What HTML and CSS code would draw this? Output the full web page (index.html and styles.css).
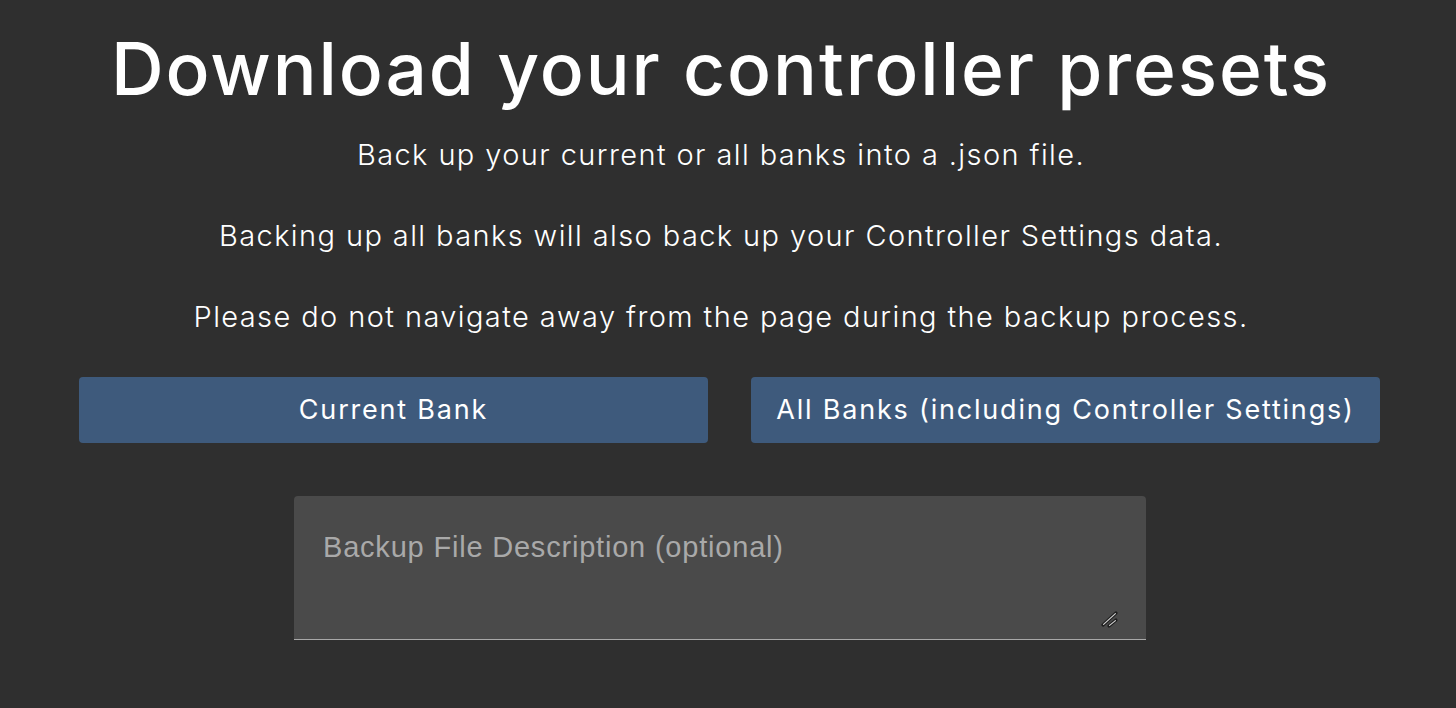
FILE: index.html
```html
<!DOCTYPE html>
<html lang="en">
<head>
<meta charset="utf-8">
<title>Download your controller presets</title>
<link rel="stylesheet" href="styles.css">
</head>
<body>
<main class="page">
  <h1 class="title">Download your controller presets</h1>
  <p class="lead">Back up your current or all banks into a .json file.</p>
  <p class="lead">Backing up all banks will also back up your Controller Settings data.</p>
  <p class="lead">Please do not navigate away from the page during the backup process.</p>
  <div class="actions">
    <button class="btn" type="button">Current Bank</button>
    <button class="btn" type="button">All Banks (including Controller Settings)</button>
  </div>
  <div class="field">
    <textarea class="desc" placeholder="Backup File Description (optional)"></textarea>
    <svg class="grip" width="18" height="18" viewBox="0 0 18 18" aria-hidden="true">
      <line x1="2" y1="14" x2="15" y2="2" stroke="#1e1e1e" stroke-width="3.2" stroke-linecap="round"/>
      <line x1="8" y1="15" x2="15" y2="9" stroke="#1e1e1e" stroke-width="3.2" stroke-linecap="round"/>
      <line x1="2.6" y1="13.4" x2="14.4" y2="2.6" stroke="#d0d0d0" stroke-width="1.2" stroke-linecap="round"/>
      <line x1="8.6" y1="14.4" x2="14.4" y2="9.6" stroke="#d0d0d0" stroke-width="1.2" stroke-linecap="round"/>
    </svg>
  </div>
</main>
</body>
</html>
```
FILE: styles.css
```css
* { box-sizing: border-box; }
html, body { margin: 0; padding: 0; }
body {
  background: #2f2f2f;
  color: #ffffff;
  font-family: "Inter", "DejaVu Sans", sans-serif;
  height: 708px;
  overflow: hidden;
}
.page {
  display: flex;
  flex-direction: column;
  align-items: center;
  padding: 24px 76px 0 62px;
}
.title {
  margin: 0;
  font-size: 73px;
  font-weight: 500;
  line-height: 90px;
  letter-spacing: 1.9px;
}
.lead {
  margin: 0;
  font-size: 29px;
  font-weight: 300;
  line-height: 81px;
  letter-spacing: 1.4px;
}
.actions {
  align-self: stretch;
  display: grid;
  grid-template-columns: 1fr 1fr;
  gap: 43px;
  margin: 20px 0 0 17px;
}
.btn {
  height: 66px;
  border: none;
  border-radius: 4px;
  background: #3e5a7c;
  color: #ffffff;
  font-family: inherit;
  font-size: 27px;
  font-weight: 400;
  letter-spacing: 1.8px;
  padding: 0 0 2px;
}
.field {
  position: relative;
  margin-top: 53px;
  margin-right: 2px;
  display: flex;
}
.desc {
  width: 852px;
  height: 144px;
  border: none;
  border-bottom: 1px solid #a8a8a8;
  border-radius: 4px 4px 0 0;
  background: #4a4a4a;
  color: #e0e0e0;
  padding: 35px 29px;
  font-family: "Liberation Sans", Arial, sans-serif;
  font-size: 29px;
  letter-spacing: 0.8px;
  resize: none;
  outline: none;
}
.desc::placeholder { color: #a9a9a9; }
.grip {
  position: absolute;
  right: 27px;
  bottom: 11px;
  pointer-events: none;
}
```
